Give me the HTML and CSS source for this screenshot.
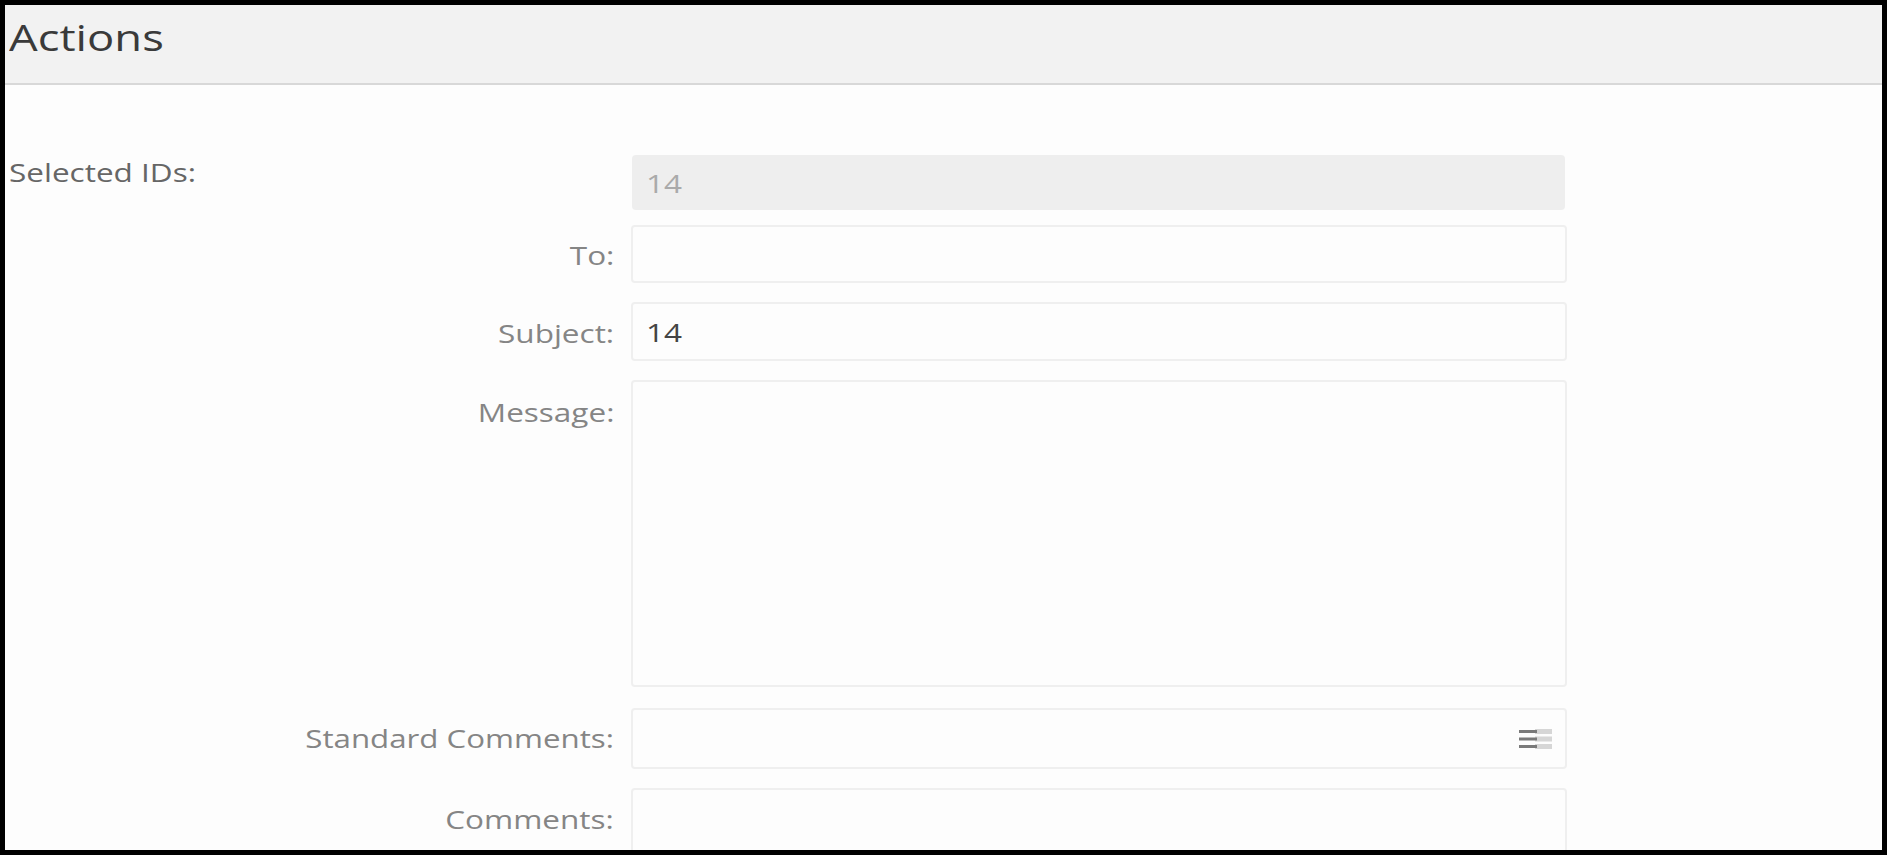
FILE: index.html
```html
<!DOCTYPE html>
<html lang="en">
<head>
<meta charset="utf-8">
<title>Actions</title>
<link rel="stylesheet" href="styles.css">
</head>
<body>
<div class="frame">
  <header class="header"><h1 class="title"><span class="wide wide-left">Actions</span></h1></header>
  <form class="form">
    <div class="row row-selected">
      <div class="label label-left"><span class="wide wide-left">Selected IDs:</span></div>
      <div class="field field-disabled"><span class="wide wide-left">14</span></div>
    </div>
    <div class="row row-to">
      <div class="label"><span class="wide">To:</span></div>
      <div class="field"></div>
    </div>
    <div class="row row-subject">
      <div class="label"><span class="wide">Subject:</span></div>
      <div class="field"><span class="wide wide-left">14</span></div>
    </div>
    <div class="row row-message">
      <div class="label label-top"><span class="wide">Message:</span></div>
      <div class="field field-area"></div>
    </div>
    <div class="row row-standard">
      <div class="label"><span class="wide">Standard Comments:</span></div>
      <div class="field field-picker">
        <svg class="picker-icon" width="33" height="20" viewBox="0 0 33 20" aria-hidden="true">
          <path class="bar-light" d="M16 0h17v5H16zM16 7.500h17v5H16zM16 15h17v5H16z"/>
          <path class="bar-dark" d="M0 1h18v3H0zM0 8.500h18v3H0zM0 16h18v3H0z"/>
        </svg>
      </div>
    </div>
    <div class="row row-comments">
      <div class="label label-top"><span class="wide">Comments:</span></div>
      <div class="field field-comments"></div>
    </div>
  </form>
</div>
</body>
</html>
```
FILE: styles.css
```css
* { box-sizing: border-box; }
html, body { margin: 0; height: 100%; overflow: hidden; }
body { font-family: "Open Sans", "Liberation Sans", sans-serif; font-size: 25px; background: #000; }
.frame { height: 100vh; border: 5px solid #000; background: #fdfdfd; overflow: hidden; }
.header { height: 80px; background: #f2f2f2; border-bottom: 2px solid #d8d8d8; padding: 0 0 0 4px; }
.title { margin: 0; font-size: 36px; font-weight: 400; line-height: 66px; color: #3a3a3a; }
.wide { display: inline-block; white-space: nowrap; transform: scaleX(1.26); transform-origin: right center; }
.wide-left { transform-origin: left center; }
.form { padding-top: 70px; }
.row { display: grid; grid-template-columns: 609px 936px; column-gap: 17px; }
.label { color: #858585; text-align: right; align-self: center; line-height: 34px; }
.label-left { text-align: left; padding-left: 4px; color: #666666; align-self: start; }
.label-top { align-self: start; }
.field { height: 58px; border: 2px solid #efefef; border-radius: 4px; background: #fdfdfd; padding: 0 0 0 13px; display: flex; align-items: center; color: #444444; }
.field-disabled { height: 55px; width: 933px; margin-left: 1px; border: 0; background: #eeeeee; color: #aaaaaa; padding-left: 14px; }
.row-to { margin-top: 15px; }
.row-to .label { padding-top: 2px; }
.row-subject { margin-top: 19px; }
.row-subject .field { height: 59px; }
.row-subject .label { padding-top: 2px; }
.row-message { margin-top: 19px; }
.row-message .label { padding-top: 15px; }
.field-area { height: 307px; }
.row-standard { margin-top: 21px; }
.row-standard .label { padding-bottom: 1px; }
.row-standard .wide { transform: scaleX(1.25); }
.field-picker { height: 61px; justify-content: flex-end; padding: 0 13px 0 0; }
.row-comments { margin-top: 19px; }
.row-comments .label { padding-top: 14px; }
.field-comments { height: 120px; }
.picker-icon { display: block; }
.bar-light { fill: #d6d6d6; }
.bar-dark { fill: #7a7a7a; }
```
